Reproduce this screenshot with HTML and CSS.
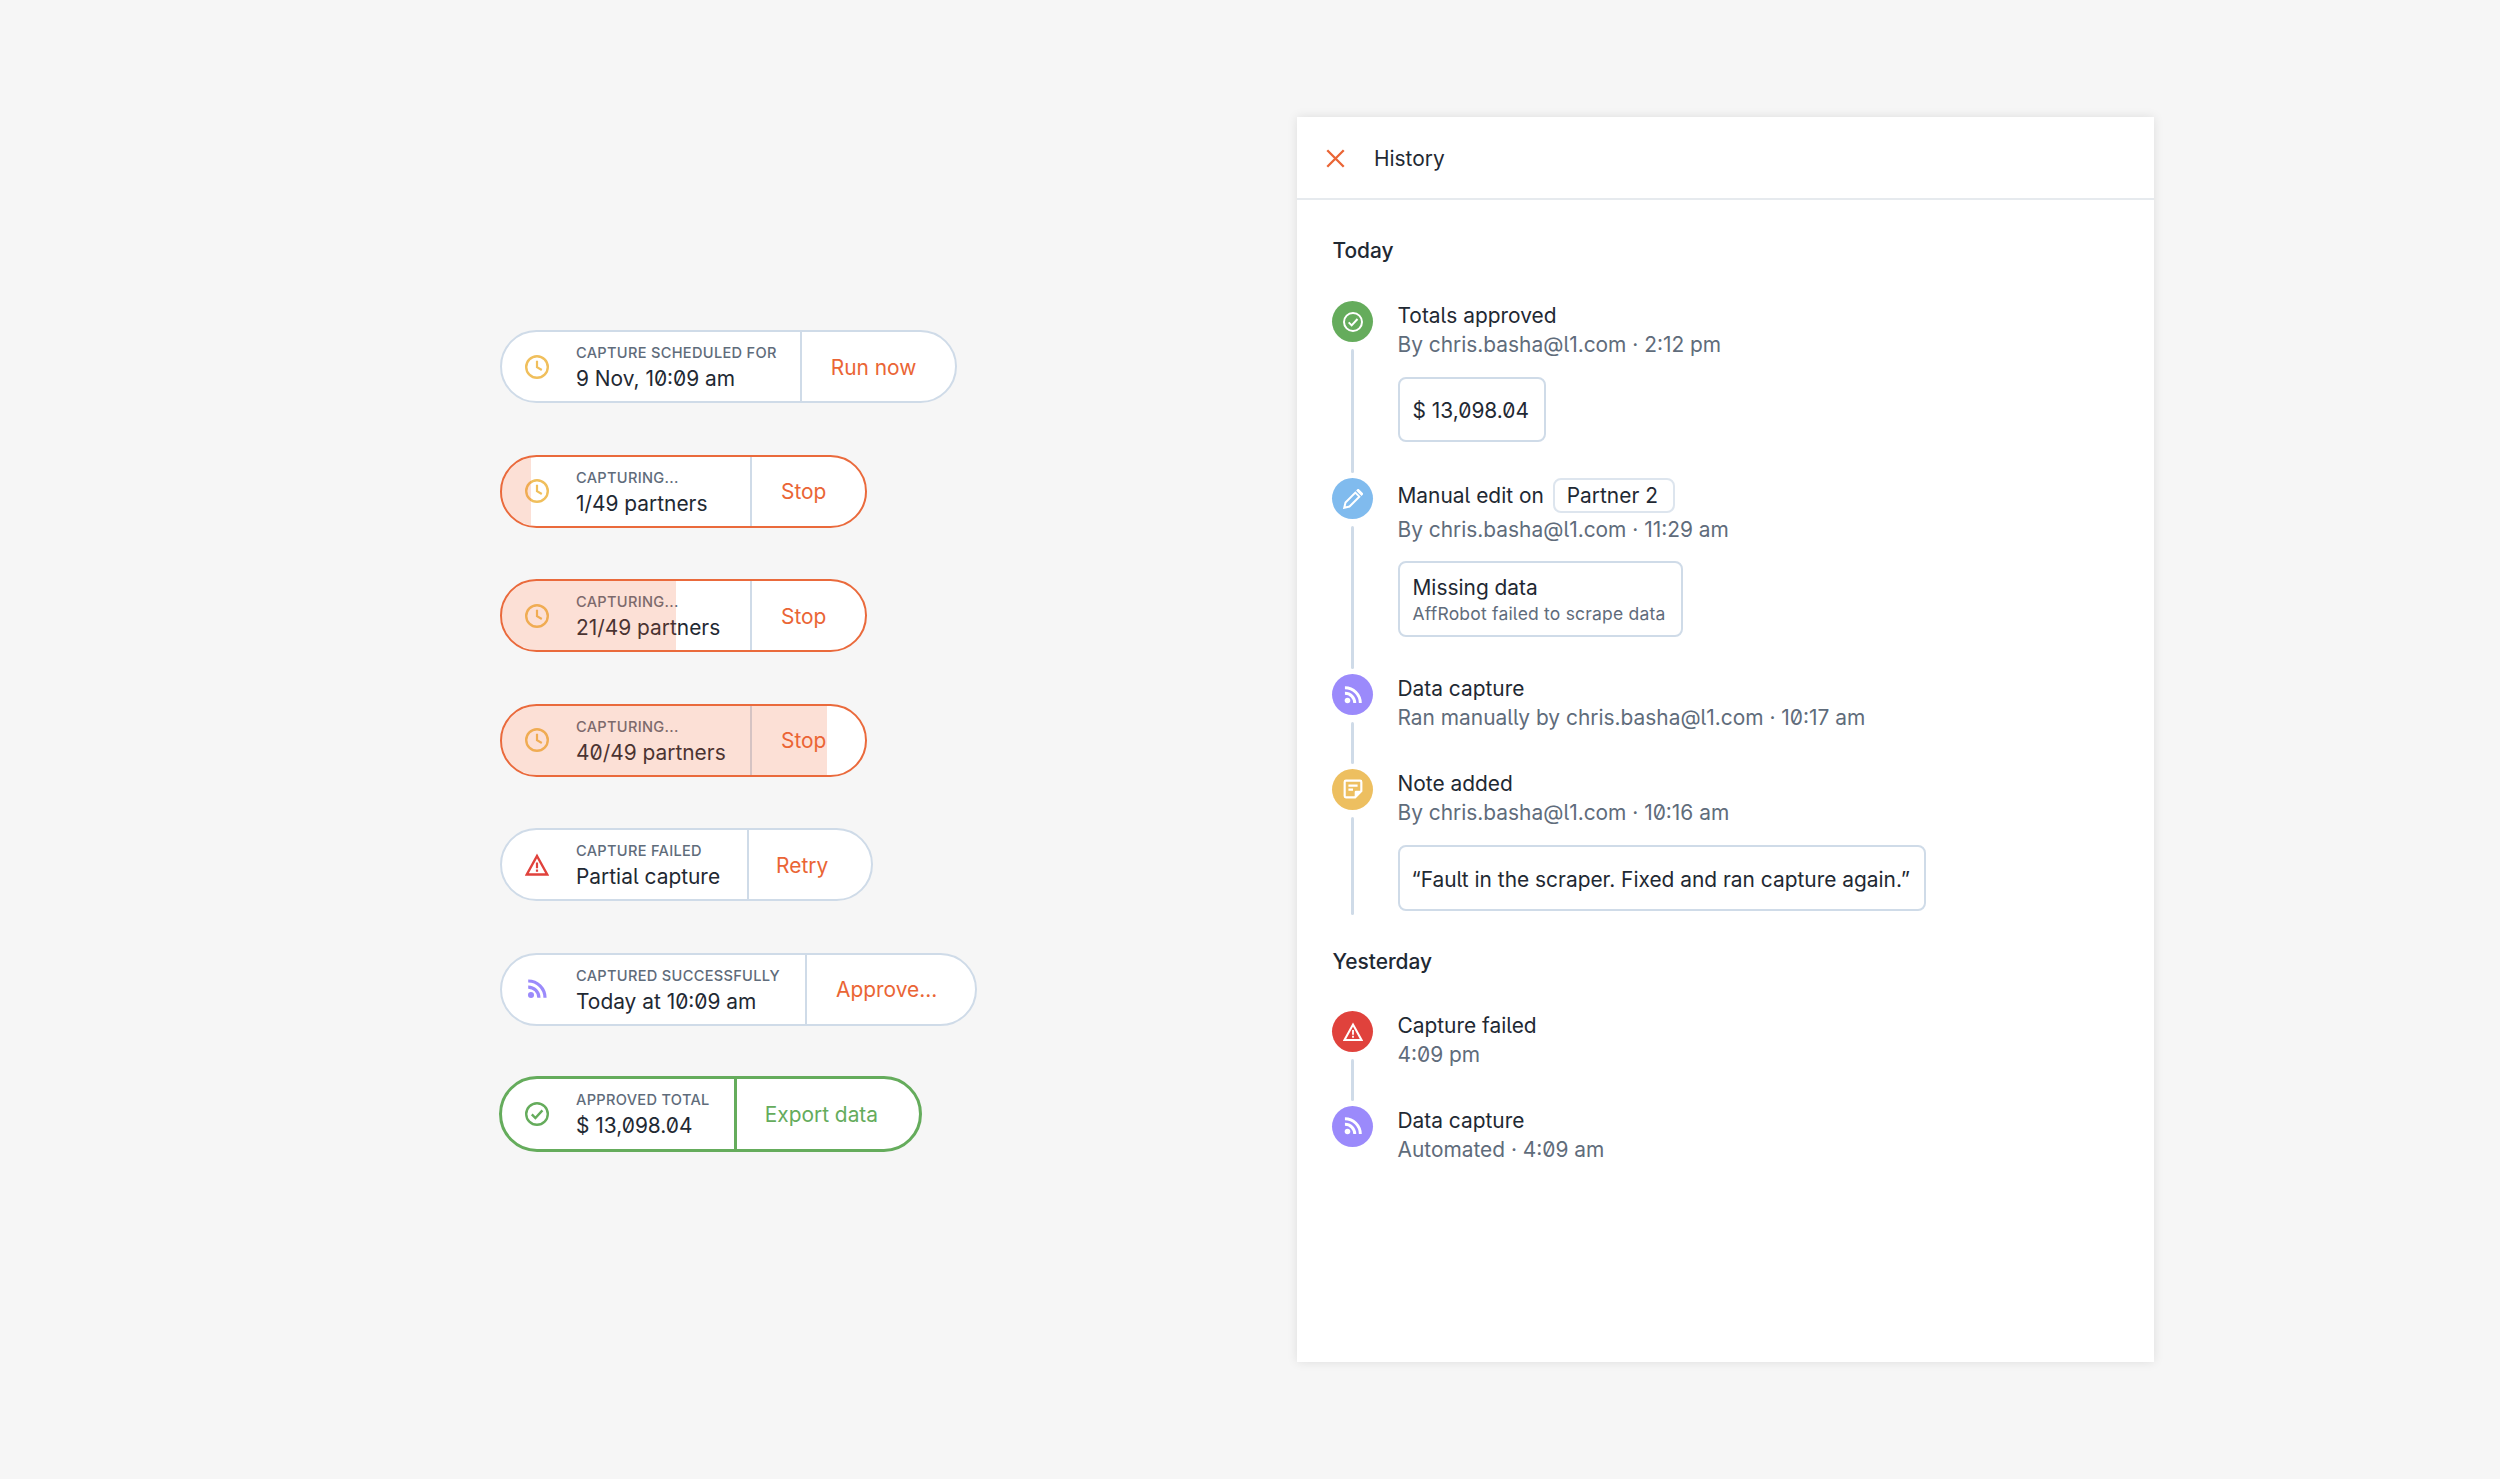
FILE: index.html
```html
<!DOCTYPE html>
<html lang="en">
<head>
  <meta charset="UTF-8">
  <title>Capture status and history</title>
  <link rel="stylesheet" href="styles.css">
</head>
<body>
  <svg class="sprite" aria-hidden="true">
    <symbol id="i-clock" viewBox="0 0 24 24"><circle cx="12" cy="12" r="10.800" fill="none" stroke="currentColor" stroke-width="2.400"/><path d="M12 5.800v6.400l4.800 2.800" fill="none" stroke="currentColor" stroke-width="2.200"/></symbol>
    <symbol id="i-warn" viewBox="0 0 24 24"><path d="M12 3 22.200 21.500H1.800Z" fill="none" stroke="currentColor" stroke-width="2.400"/><path d="M10.900 9.500h2.200v5.800h-2.200zM10.900 16.600h2.200v2.200h-2.200z" fill="currentColor"/></symbol>
    <symbol id="i-rss" viewBox="-3 -3 30 30"><circle cx="4.500" cy="19.500" r="3.800" fill="currentColor"/><path d="M1 9.600a13.400 13.400 0 0 1 13.400 13.400M1 2a21 21 0 0 1 21 21" fill="none" stroke="currentColor" stroke-width="4"/></symbol>
    <symbol id="i-check" viewBox="0 0 24 24"><circle cx="12" cy="12" r="10.800" fill="none" stroke="currentColor" stroke-width="2.400"/><path d="m6.800 12.400 3.600 3.600 7-7.600" fill="none" stroke="currentColor" stroke-width="2.400"/></symbol>
    <symbol id="i-pencil" viewBox="0 0 24 24"><path d="M1.500 22.500l1.500-6.300L14.800 4.400l4.800 4.800L7.800 21Z" fill="none" stroke="currentColor" stroke-width="2.400"/><path d="m17 1.800 1.200-1.200 5.200 5.200-1.200 1.200Z" fill="currentColor" stroke="currentColor" stroke-width="1.800"/></symbol>
    <symbol id="i-note" viewBox="0 0 24 24"><path d="M22 14.500V3.500a1.500 1.500 0 0 0-1.500-1.500h-17A1.500 1.500 0 0 0 2 3.500v17A1.500 1.500 0 0 0 3.500 22h11Z" fill="none" stroke="currentColor" stroke-width="2.600"/><path d="M14 22v-6.500a1.500 1.500 0 0 1 1.500-1.500H22Z" fill="currentColor"/><path d="M6.500 8h11M6.500 12.800H12" fill="none" stroke="currentColor" stroke-width="2.600"/></symbol>
  </svg>

  <div class="page">
    <div class="pills">
      <div class="pill pill-scheduled">
        <div class="pill-main">
          <svg class="pill-icon amber"><use href="#i-clock"/></svg>
          <div class="pill-text">
            <div class="pill-label">CAPTURE SCHEDULED FOR</div>
            <div class="pill-value">9 Nov, 10:09 am</div>
          </div>
        </div>
        <div class="pill-action">Run now</div>
      </div>

      <div class="pill pill-running">
        <div class="pill-main">
          <svg class="pill-icon amber"><use href="#i-clock"/></svg>
          <div class="pill-text">
            <div class="pill-label">CAPTURING...</div>
            <div class="pill-value">1/49 partners</div>
          </div>
        </div>
        <div class="pill-action">Stop</div>
        <div class="pill-progress" style="width: 29px"></div>
      </div>

      <div class="pill pill-running">
        <div class="pill-main">
          <svg class="pill-icon amber"><use href="#i-clock"/></svg>
          <div class="pill-text">
            <div class="pill-label">CAPTURING...</div>
            <div class="pill-value">21/49 partners</div>
          </div>
        </div>
        <div class="pill-action">Stop</div>
        <div class="pill-progress" style="width: 174px"></div>
      </div>

      <div class="pill pill-running">
        <div class="pill-main">
          <svg class="pill-icon amber"><use href="#i-clock"/></svg>
          <div class="pill-text">
            <div class="pill-label">CAPTURING...</div>
            <div class="pill-value">40/49 partners</div>
          </div>
        </div>
        <div class="pill-action">Stop</div>
        <div class="pill-progress" style="width: 325px"></div>
      </div>

      <div class="pill pill-failed">
        <div class="pill-main">
          <svg class="pill-icon red"><use href="#i-warn"/></svg>
          <div class="pill-text">
            <div class="pill-label">CAPTURE FAILED</div>
            <div class="pill-value">Partial capture</div>
          </div>
        </div>
        <div class="pill-action">Retry</div>
      </div>

      <div class="pill pill-captured">
        <div class="pill-main">
          <svg class="pill-icon purple"><use href="#i-rss"/></svg>
          <div class="pill-text">
            <div class="pill-label">CAPTURED SUCCESSFULLY</div>
            <div class="pill-value">Today at 10:09 am</div>
          </div>
        </div>
        <div class="pill-action">Approve...</div>
      </div>

      <div class="pill pill-done">
        <div class="pill-main">
          <svg class="pill-icon green"><use href="#i-check"/></svg>
          <div class="pill-text">
            <div class="pill-label">APPROVED TOTAL</div>
            <div class="pill-value">$ 13,098.04</div>
          </div>
        </div>
        <div class="pill-action">Export data</div>
      </div>
    </div>

    <div class="panel">
      <div class="panel-head">
        <svg class="close-icon" viewBox="0 0 18 18"><path d="M1.200 1.200l15.600 15.600M16.800 1.200 1.200 16.800" fill="none" stroke="currentColor" stroke-width="2.200"/></svg>
        <span>History</span>
      </div>
      <div class="panel-body">
        <div class="day">Today</div>

        <div class="item item-approved">
          <div class="rail">
            <div class="dot bg-green"><svg><use href="#i-check"/></svg></div>
            <div class="rail-line"></div>
          </div>
          <div class="item-text">
            <div class="item-title">Totals approved</div>
            <div class="item-sub">By chris.basha@l1.com · 2:12 pm</div>
            <div class="chip chip-total">$ 13,098.04</div>
          </div>
        </div>

        <div class="item item-edit">
          <div class="rail">
            <div class="dot bg-blue"><svg><use href="#i-pencil"/></svg></div>
            <div class="rail-line"></div>
          </div>
          <div class="item-text">
            <div class="item-title title-row">Manual edit on <span class="tag">Partner 2</span></div>
            <div class="item-sub">By chris.basha@l1.com · 11:29 am</div>
            <div class="chip chip-detail">
              <div>Missing data</div>
              <div class="chip-small">AffRobot failed to scrape data</div>
            </div>
          </div>
        </div>

        <div class="item item-plain">
          <div class="rail">
            <div class="dot bg-purple"><svg class="dot-rss"><use href="#i-rss"/></svg></div>
            <div class="rail-line"></div>
          </div>
          <div class="item-text">
            <div class="item-title">Data capture</div>
            <div class="item-sub">Ran manually by chris.basha@l1.com · 10:17 am</div>
          </div>
        </div>

        <div class="item item-last">
          <div class="rail">
            <div class="dot bg-amber"><svg><use href="#i-note"/></svg></div>
            <div class="rail-line"></div>
          </div>
          <div class="item-text">
            <div class="item-title">Note added</div>
            <div class="item-sub">By chris.basha@l1.com · 10:16 am</div>
            <div class="chip chip-quote">“Fault in the scraper. Fixed and ran capture again.”</div>
          </div>
        </div>

        <div class="day day-second">Yesterday</div>

        <div class="item item-plain">
          <div class="rail">
            <div class="dot bg-red"><svg><use href="#i-warn"/></svg></div>
            <div class="rail-line"></div>
          </div>
          <div class="item-text">
            <div class="item-title">Capture failed</div>
            <div class="item-sub">4:09 pm</div>
          </div>
        </div>

        <div class="item">
          <div class="rail">
            <div class="dot bg-purple"><svg class="dot-rss"><use href="#i-rss"/></svg></div>
          </div>
          <div class="item-text">
            <div class="item-title">Data capture</div>
            <div class="item-sub">Automated · 4:09 am</div>
          </div>
        </div>
      </div>
    </div>
  </div>
</body>
</html>
```

FILE: styles.css
```css
* { box-sizing: border-box; }
body {
  margin: 0;
  background-color: #f6f6f6;
  color: #1f2933;
  font-family: 'Inter', 'Liberation Sans', sans-serif;
  font-size: 20.9px;
  line-height: 29px;
  font-feature-settings: "zero", "cv05";
}
.sprite { display: none; }
.page {
  display: flex;
  align-items: flex-start;
  height: 1479px;
  padding-left: 500px;
  overflow: hidden;
}

/* status pills */
.pills {
  flex: none;
  width: 797px;
  margin-top: 330px;
  display: flex;
  flex-direction: column;
  align-items: flex-start;
  gap: 51.5px;
}
.pill {
  position: relative;
  display: flex;
  height: 73px;
  background-color: #fff;
  border: 2px solid #cfdbe8;
  border-radius: 37px;
  overflow: hidden;
  white-space: nowrap;
}
.pill-main {
  display: flex;
  align-items: center;
  padding: 0 25px 0 23px;
  border-right: 2px solid #cfdbe8;
}
.pill-icon {
  flex: none;
  width: 24px;
  height: 24px;
  margin-right: 27px;
}
.amber { color: #f0bf5c; }
.red { color: #e0423c; }
.purple { color: #9b8afb; }
.green { color: #65ac5c; }
.pill-text { padding-top: 5px; }
.pill-label {
  font-size: 14.6px;
  font-weight: 500;
  line-height: 20px;
  letter-spacing: 0.3px;
  color: #5f6c7b;
}
.pill-value {
  line-height: 32px;
}
.pill-action {
  display: flex;
  align-items: center;
  padding: 1px 39px 0 29px;
  color: #ea6535;
}
.pill-scheduled .pill-main { padding-right: 23px; }
.pill-failed .pill-main { padding-right: 26.5px; }
.pill-failed .pill-action { padding-left: 27.5px; padding-right: 42.5px; }
.pill-captured .pill-action { padding-right: 38px; }
.pill-running { border-color: #ea6a3c; }
.pill-running .pill-main { width: 250px; }
.pill-progress {
  position: absolute;
  left: 0;
  top: 0;
  bottom: 0;
  background-color: rgba(238, 102, 51, 0.2);
}
.pill-done {
  height: 76px;
  margin: -1px 0 0 -1px;
  border: 3px solid #65ac5c;
  border-radius: 38px;
}
.pill-done .pill-main { padding-right: 24px; border-right: 3px solid #65ac5c; }
.pill-done .pill-text { padding-top: 3px; }
.pill-done .pill-action { color: #65ac5c; padding-left: 28px; padding-right: 40.5px; }

/* history panel */
.panel {
  flex: none;
  width: 857px;
  height: 1245px;
  margin-top: 117px;
  background-color: #fff;
  box-shadow: 0 0 10px rgba(0, 0, 0, 0.1);
}
.panel-head {
  display: flex;
  align-items: center;
  height: 83px;
  padding: 2px 0 0 29px;
  border-bottom: 2px solid #e6eaee;
}
.close-icon {
  width: 19px;
  height: 19px;
  margin-right: 29px;
  color: #ea6535;
}
.panel-body { padding: 36px 35px 0; }
.day {
  font-weight: 500;
  margin-bottom: 36px;
  margin-left: 0.5px;
}
.day-second { margin-top: 27px; margin-bottom: 35.5px; }

.item { display: flex; }
.item-approved { height: 177px; }
.item-edit { height: 196px; }
.item-plain { height: 94.500px; }
.item-last { height: 151px; }
.rail {
  flex: none;
  width: 41px;
  margin-right: 24.5px;
  display: flex;
  flex-direction: column;
  align-items: center;
}
.dot {
  flex: none;
  width: 41px;
  height: 41px;
  border-radius: 50%;
  color: #fff;
  display: flex;
  align-items: center;
  justify-content: center;
}
.dot svg { width: 20px; height: 20px; }
.dot .dot-rss { width: 22px; height: 22px; }
.bg-green { background-color: #65ac5c; }
.bg-blue { background-color: #80bbee; }
.bg-purple { background-color: #9b8afb; }
.bg-amber { background-color: #edbf60; }
.bg-red { background-color: #e0423c; }
.rail-line {
  flex: 1;
  width: 3px;
  margin: 7px 0 5px;
  background-color: #cfdbe8;
  border-radius: 2px;
}
.item-sub { color: #5f6c7b; }
.title-row { display: flex; align-items: center; height: 35px; margin-bottom: 1.500px; }
.tag {
  display: flex;
  align-items: center;
  height: 35px;
  margin-left: 9px;
  padding: 0 15px 0 12px;
  border: 2px solid #dde5ee;
  border-radius: 8px;
}
.chip {
  display: inline-block;
  margin-top: 18px;
  padding: 17px 15px 0 13px;
  border: 2px solid #cfdbe8;
  border-radius: 8px;
}
.chip-total { height: 65px; }
.chip-quote { height: 66px; padding: 18px 14px 0 12px; }
.chip-detail { height: 76px; margin-top: 17px; padding-top: 10px; }
.chip-small {
  font-size: 17.5px;
  line-height: 24px;
  letter-spacing: 0.2px;
  color: #5f6c7b;
}
```
